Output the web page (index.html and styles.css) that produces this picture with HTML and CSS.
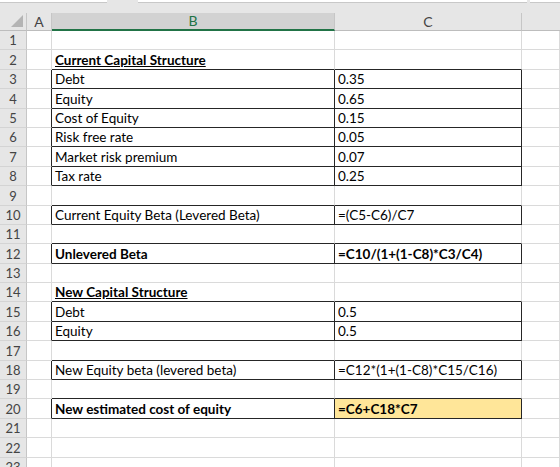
FILE: index.html
```html
<!DOCTYPE html>
<html>
<head>
<meta charset="utf-8">
<link rel="stylesheet" href="styles.css">
</head>
<body>
<div class="app">
  <div class="topbar">
    <div class="fbox w1"></div>
    <div class="fbox w2"></div>
    <div class="fbox w3"></div>
  </div>
  <div class="sheet">
    <div class="hd corner"><span class="tri"></span></div>
    <div class="hd">A</div>
    <div class="hd sel">B</div>
    <div class="hd">C</div>
    <div class="hd last"></div>

    <div class="rn">1</div><div class="c"></div><div class="c"></div><div class="c"></div><div class="c"></div>
    <div class="rn">2</div><div class="c"></div><div class="c bb b u">Current Capital Structure</div><div class="c bb"></div><div class="c"></div>
    <div class="rn">3</div><div class="c br"></div><div class="c bx">Debt</div><div class="c bx">0.35</div><div class="c"></div>
    <div class="rn">4</div><div class="c br"></div><div class="c bx">Equity</div><div class="c bx">0.65</div><div class="c"></div>
    <div class="rn">5</div><div class="c br"></div><div class="c bx">Cost of Equity</div><div class="c bx">0.15</div><div class="c"></div>
    <div class="rn">6</div><div class="c br"></div><div class="c bx">Risk free rate</div><div class="c bx">0.05</div><div class="c"></div>
    <div class="rn">7</div><div class="c br"></div><div class="c bx">Market risk premium</div><div class="c bx">0.07</div><div class="c"></div>
    <div class="rn">8</div><div class="c br"></div><div class="c bx">Tax rate</div><div class="c bx">0.25</div><div class="c"></div>
    <div class="rn">9</div><div class="c"></div><div class="c bb"></div><div class="c bb"></div><div class="c"></div>
    <div class="rn">10</div><div class="c br"></div><div class="c bx">Current Equity Beta (Levered Beta)</div><div class="c bx">=(C5-C6)/C7</div><div class="c"></div>
    <div class="rn">11</div><div class="c"></div><div class="c bb"></div><div class="c bb"></div><div class="c"></div>
    <div class="rn">12</div><div class="c br"></div><div class="c bx b">Unlevered Beta</div><div class="c bx b">=C10/(1+(1-C8)*C3/C4)</div><div class="c"></div>
    <div class="rn">13</div><div class="c"></div><div class="c"></div><div class="c"></div><div class="c"></div>
    <div class="rn">14</div><div class="c"></div><div class="c bb b u">New Capital Structure</div><div class="c bb"></div><div class="c"></div>
    <div class="rn">15</div><div class="c br"></div><div class="c bx">Debt</div><div class="c bx">0.5</div><div class="c"></div>
    <div class="rn">16</div><div class="c br"></div><div class="c bx">Equity</div><div class="c bx">0.5</div><div class="c"></div>
    <div class="rn">17</div><div class="c"></div><div class="c bb"></div><div class="c bb"></div><div class="c"></div>
    <div class="rn">18</div><div class="c br"></div><div class="c bx">New Equity beta (levered beta)</div><div class="c bx">=C12*(1+(1-C8)*C15/C16)</div><div class="c"></div>
    <div class="rn">19</div><div class="c"></div><div class="c bb"></div><div class="c bb"></div><div class="c"></div>
    <div class="rn">20</div><div class="c br"></div><div class="c bx b">New estimated cost of equity</div><div class="c bx b hl">=C6+C18*C7</div><div class="c"></div>
    <div class="rn">21</div><div class="c"></div><div class="c"></div><div class="c"></div><div class="c"></div>
    <div class="rn">22</div><div class="c"></div><div class="c"></div><div class="c"></div><div class="c"></div>
    <div class="rn">23</div><div class="c"></div><div class="c"></div><div class="c"></div><div class="c"></div>
  </div>
</div>
</body>
</html>
```

FILE: styles.css
```css
* { box-sizing: border-box; }
html, body {
  margin: 0;
  padding: 0;
  width: 560px;
  height: 467px;
  overflow: hidden;
  background: #ffffff;
}
.app {
  font-family: Lato, "Open Sans", sans-serif;
  color: #000;
}
.topbar {
  height: 13px;
  background: #e6e6e6;
  display: flex;
  align-items: flex-start;
}
.fbox {
  height: 3px;
  background: #ffffff;
  border-bottom: 1px solid #c8c8c8;
}
.w1 { width: 107px; }
.w2 { width: 389px; margin-left: 31px; }
.w3 { flex: 1; margin-left: 3px; }

.sheet {
  display: grid;
  grid-template-columns: 27px 25px 283px 187px 1fr;
  grid-template-rows: 18px;
  grid-auto-rows: 19.4px;
}
.hd {
  background: #e6e6e6;
  border-right: 1px solid #c6c6c6;
  border-bottom: 1px solid #bdbdbd;
  color: #444;
  font-size: 14px;
  display: flex;
  align-items: center;
  justify-content: center;
  line-height: 1;
}
.hd.last { border-right: none; }
.hd.sel {
  background: #d2d2d2;
  color: #217346;
  border-bottom: 2px solid #217346;
}
.corner { position: relative; }
.tri {
  position: absolute;
  right: 3px;
  bottom: 3px;
  width: 0;
  height: 0;
  border-left: 12px solid transparent;
  border-bottom: 12px solid #b4b4b4;
}
.rn {
  background: #e6e6e6;
  border-right: 1px solid #c6c6c6;
  border-bottom: 1px solid #d4d4d4;
  color: #444;
  font-size: 13px;
  display: flex;
  align-items: flex-end;
  justify-content: center;
  padding-bottom: 1px;
  line-height: 16px;
}
.c {
  border-right: 1px solid #dadada;
  border-bottom: 1px solid #dadada;
  font-size: 13.5px;
  line-height: 16px;
  display: flex;
  align-items: flex-end;
  padding: 0 3px 1px 3px;
  white-space: nowrap;
  overflow: visible;
}
.bx {
  border-right-color: #262626;
  border-bottom-color: #262626;
}
.bb { border-bottom-color: #262626; }
.br { border-right-color: #262626; }
.b { font-weight: bold; }
.u { text-decoration: underline; }
.hl { background: #ffe699; }
```
